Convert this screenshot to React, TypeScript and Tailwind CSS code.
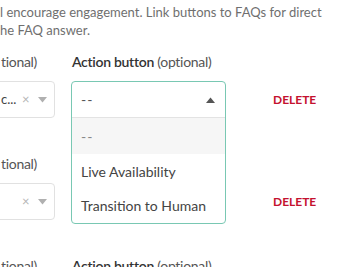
import React from "react";

const font = { fontFamily: "Lato, 'Open Sans', sans-serif" };

function LeftSelect({ text }: { text: string }) {
  return (
    <div className="h-[37px] w-[59px] ml-[-4px] border border-[#e1e1e1] rounded-[4px] flex items-center bg-white">
      <span className="pl-[4px] w-[24px] text-[13px] text-[#444] overflow-hidden whitespace-nowrap">{text}</span>
      <span className="ml-[1px] text-[13px] leading-none text-[#b5b5b5]">×</span>
      <svg className="ml-[8px]" width="9" height="6" viewBox="0 0 9 6">
        <path d="M0 0 H9 L4.5 5.5 Z" fill="#b0b0b0" />
      </svg>
    </div>
  );
}

function Label({ showRight = true }: { showRight?: boolean }) {
  return (
    <div className="flex h-[20px] items-center text-[14px] leading-[20px] whitespace-nowrap tracking-[-0.3px]">
      <div className="w-[71px] text-[#555] ml-[1px]">tional)</div>
      {showRight && (
        <div className="text-[#555]">
          <span className="font-semibold text-[#333]">Action button</span> (optional)
        </div>
      )}
    </div>
  );
}

function Delete() {
  return (
    <div className="ml-[47px] text-[12px] font-bold tracking-[0px] text-[#c4112f] leading-none">DELETE</div>
  );
}

export default function App() {
  return (
    <div className="w-[364px] h-[267px] overflow-hidden bg-white relative" style={font}>
      <p className="pt-[3px] text-[13px] leading-[18px] text-[#6f6f6f] whitespace-nowrap">
        l encourage engagement. Link buttons to FAQs for direct
        <br />
        he FAQ answer.
      </p>

      {/* Row 1 */}
      <div className="mt-[13px]">
        <Label />
        <div className="mt-[9px] flex items-center">
          <LeftSelect text="c..." />
          <div className="ml-[16px] relative w-[155px] h-[37px]">
            <div className="absolute left-0 top-0 w-[155px] z-10 bg-white border border-[#79c8b3] rounded-[4px]">
              <div className="h-[36px] flex items-center justify-between pl-[9px] pr-[10px] border-b border-[#e3e3e3] text-[14px] text-[#555]">
                <span className="tracking-[1px]">--</span>
                <svg width="9" height="6" viewBox="0 0 9 6">
                  <path d="M0 6 H9 L4.5 0.5 Z" fill="#555" />
                </svg>
              </div>
              <div className="h-[36px] flex items-center pl-[9px] bg-[#f6f6f6] text-[14px] text-[#888] tracking-[1px]">--</div>
              <div className="h-[35px] flex items-center pl-[9px] text-[14px] text-[#444]">Live Availability</div>
              <div className="h-[34px] flex items-center pl-[9px] text-[14px] text-[#444] pb-[1px]">Transition to Human</div>
            </div>
          </div>
          <Delete />
        </div>
      </div>

      {/* Row 2 */}
      <div className="mt-[36px]">
        <Label showRight={false} />
        <div className="mt-[9px] flex items-center">
          <LeftSelect text="" />
          <div className="ml-[16px] w-[155px] h-[37px] border border-[#e1e1e1] rounded-[4px]" />
          <Delete />
        </div>
      </div>

      {/* Row 3 */}
      <div className="mt-[36px]">
        <Label />
      </div>
    </div>
  );
}
